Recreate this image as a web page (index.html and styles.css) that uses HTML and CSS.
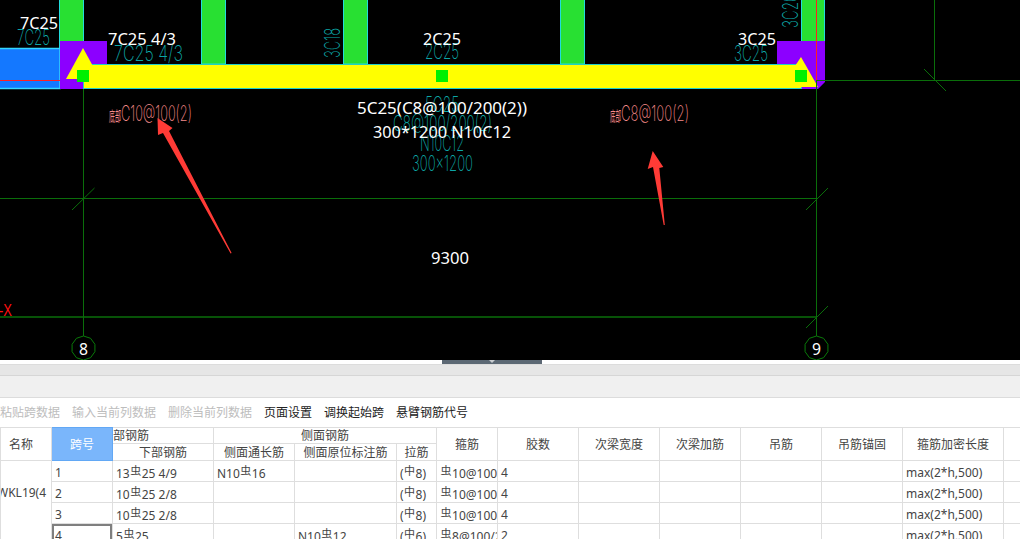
FILE: index.html
```html
<!DOCTYPE html>
<html lang="zh">
<head>
<meta charset="utf-8">
<title>梁平法表格</title>
<link rel="stylesheet" href="styles.css">
</head>
<body>
<svg class="cad" width="1020" height="360" viewBox="0 0 1020 360" xmlns="http://www.w3.org/2000/svg">
  <defs>
    <polygon id="axis" points="0,-12 7.06,-9.71 11.41,-3.71 11.41,3.71 7.06,9.71 0,12 -7.06,9.71 -11.41,3.71 -11.41,-3.71 -7.06,-9.71"/>
  </defs>

  <rect class="col" x="59.5" y="-2" width="24" height="66"/>
  <rect class="col" x="201.5" y="-2" width="24" height="66"/>
  <rect class="col" x="343.5" y="-2" width="24" height="66"/>
  <rect class="col" x="560.5" y="-2" width="24" height="66"/>
  <rect class="col" x="801.5" y="-2" width="23" height="46"/>

  <rect class="side" x="-2" y="48.5" width="62" height="40"/>
  <line class="red" x1="0" y1="80.5" x2="78" y2="80.5"/>

  <path class="purple" d="M60 41H107V64H83V89H60Z"/>
  <path class="purple" d="M777 41H825V82L818 89H801V64H777Z"/>

  <rect class="beam" x="83.5" y="64.5" width="718" height="24"/>
  <polygon class="yellow" points="83,48 66,79 100,79"/>
  <polygon class="yellow" points="801,57 818,87 795,87 795,66"/>

  <rect class="node" x="77" y="70" width="12" height="12"/>
  <rect class="node" x="436" y="70" width="12" height="12"/>
  <rect class="node" x="795" y="70" width="12" height="12"/>

  <line class="red" x1="816.5" y1="0" x2="816.5" y2="80"/>

  <g class="grid">
    <line x1="816.5" y1="80" x2="816.5" y2="336"/>
    <line x1="816" y1="80.5" x2="1020" y2="80.5"/>
    <line x1="934.5" y1="0" x2="934.5" y2="80"/>
    <line x1="924" y1="69" x2="946" y2="91"/>
    <line x1="83.5" y1="89" x2="83.5" y2="336"/>
    <line x1="0" y1="198.5" x2="816" y2="198.5"/>
    <line class="grid-thick" x1="0" y1="317" x2="816" y2="317"/>
    <line x1="72" y1="210" x2="94.5" y2="188"/>
    <line x1="806" y1="210" x2="828" y2="188"/>
    <line x1="806" y1="328" x2="828" y2="306"/>
    <use href="#axis" class="axis" transform="translate(83.5 348)"/>
    <use href="#axis" class="axis" transform="translate(816.5 348)"/>
  </g>

  <g class="teal">
    <text x="17" y="45" textLength="33" lengthAdjust="spacingAndGlyphs">7C25</text>
    <text x="114" y="61" textLength="69" lengthAdjust="spacingAndGlyphs">7C25 4/3</text>
    <text x="340" y="58" textLength="30" lengthAdjust="spacingAndGlyphs" transform="rotate(-90 340 58)">3C18</text>
    <text x="425" y="59" textLength="34" lengthAdjust="spacingAndGlyphs">2C25</text>
    <text x="425" y="112" textLength="34" lengthAdjust="spacingAndGlyphs">5C25</text>
    <text x="393" y="131" textLength="99" lengthAdjust="spacingAndGlyphs">C8@100/200(2)</text>
    <text x="420" y="151" textLength="44" lengthAdjust="spacingAndGlyphs">N10C12</text>
    <text x="412" y="171" textLength="61" lengthAdjust="spacingAndGlyphs">300x1200</text>
    <text x="734" y="61" textLength="34" lengthAdjust="spacingAndGlyphs">3C25</text>
    <text x="798" y="28" textLength="34" lengthAdjust="spacingAndGlyphs" transform="rotate(-90 798 28)">3C20</text>
  </g>

  <g class="pink">
    <text class="pink-cjk" x="109" y="121" textLength="12" lengthAdjust="spacingAndGlyphs">底部</text>
    <text x="121" y="121" textLength="71" lengthAdjust="spacingAndGlyphs">C10@100(2)</text>
    <text class="pink-cjk" x="610" y="121" textLength="11" lengthAdjust="spacingAndGlyphs">底部</text>
    <text x="621" y="121" textLength="68" lengthAdjust="spacingAndGlyphs">C8@100(2)</text>
  </g>

  <g class="label">
    <text x="20" y="29" textLength="38" lengthAdjust="spacingAndGlyphs">7C25</text>
    <text x="108" y="45" textLength="68" lengthAdjust="spacingAndGlyphs">7C25 4/3</text>
    <text x="423" y="45" textLength="38" lengthAdjust="spacingAndGlyphs">2C25</text>
    <text x="738" y="45" textLength="38" lengthAdjust="spacingAndGlyphs">3C25</text>
    <text x="357" y="114" textLength="170" lengthAdjust="spacingAndGlyphs">5C25(C8@100/200(2))</text>
    <text x="373" y="138" textLength="138" lengthAdjust="spacingAndGlyphs">300*1200 N10C12</text>
    <text x="431" y="264" textLength="38" lengthAdjust="spacingAndGlyphs">9300</text>
    <text x="79" y="355" textLength="9" lengthAdjust="spacingAndGlyphs">8</text>
    <text x="812" y="355" textLength="9" lengthAdjust="spacingAndGlyphs">9</text>
  </g>

  <text class="axis-x" x="-1" y="316" textLength="13" lengthAdjust="spacingAndGlyphs">-X</text>

  <polygon class="arrow" points="157.5,118 158,135 163,133 230.6,253.5 231.6,253 169,131 172.5,128"/>
  <polygon class="arrow" points="652.7,151 647.7,169 653,167 663.7,225 664.8,225 659.3,168 663.3,167"/>
</svg>

<div class="strip"><div class="handle"><span class="handle-arrow"></span></div></div>
<div class="bar-gray"></div>
<div class="bar-light"></div>

<div class="toolbar">
  <span class="tool off">粘贴跨数据</span>
  <span class="tool off">输入当前列数据</span>
  <span class="tool off">删除当前列数据</span>
  <span class="tool">页面设置</span>
  <span class="tool">调换起始跨</span>
  <span class="tool">悬臂钢筋代号</span>
</div>

<div class="table-wrap">
<table class="rebar">
  <colgroup>
    <col class="w-name"><col class="w-span"><col class="w-101"><col class="w-81"><col class="w-102"><col class="w-40"><col class="w-61"><col class="w-81"><col class="w-81"><col class="w-81"><col class="w-81"><col class="w-81"><col class="w-101"><col class="w-rest">
  </colgroup>
  <thead>
    <tr class="h1">
      <th rowspan="2" class="name-head">名称</th>
      <th rowspan="2" class="span-head">跨号</th>
      <th class="clip-head">部钢筋</th>
      <th colspan="3">侧面钢筋</th>
      <th rowspan="2">箍筋</th>
      <th rowspan="2">胶数</th>
      <th rowspan="2">次梁宽度</th>
      <th rowspan="2">次梁加筋</th>
      <th rowspan="2">吊筋</th>
      <th rowspan="2">吊筋锚固</th>
      <th rowspan="2">箍筋加密长度</th>
      <th rowspan="2"></th>
    </tr>
    <tr class="h2">
      <th>下部钢筋</th>
      <th>侧面通长筋</th>
      <th>侧面原位标注筋</th>
      <th>拉筋</th>
    </tr>
  </thead>
  <tbody>
    <tr>
      <td rowspan="3" class="name">WKL19(4</td>
      <td>1</td><td>13<span class="bar">虫</span>25 4/9</td><td>N10<span class="bar">虫</span>16</td><td></td><td>(<span class="bar">中</span>8)</td><td><span class="bar">虫</span>10@100/200(4)</td><td>4</td><td></td><td></td><td></td><td></td><td>max(2*h,500)</td><td></td>
    </tr>
    <tr>
      <td>2</td><td>10<span class="bar">虫</span>25 2/8</td><td></td><td></td><td>(<span class="bar">中</span>8)</td><td><span class="bar">虫</span>10@100/200(4)</td><td>4</td><td></td><td></td><td></td><td></td><td>max(2*h,500)</td><td></td>
    </tr>
    <tr>
      <td>3</td><td>10<span class="bar">虫</span>25 2/8</td><td></td><td></td><td>(<span class="bar">中</span>8)</td><td><span class="bar">虫</span>10@100/200(4)</td><td>4</td><td></td><td></td><td></td><td></td><td>max(2*h,500)</td><td></td>
    </tr>
    <tr>
      <td class="name-cont"></td>
      <td class="current">4</td><td>5<span class="bar">虫</span>25</td><td></td><td>N10<span class="bar">虫</span>12</td><td>(<span class="bar">中</span>6)</td><td><span class="bar">虫</span>8@100/200(2)</td><td>2</td><td></td><td></td><td></td><td></td><td>max(2*h,500)</td><td></td>
    </tr>
  </tbody>
</table>
</div>
</body>
</html>
```
FILE: styles.css
```css
html, body {
  margin: 0;
  padding: 0;
}
body {
  width: 1020px;
  height: 539px;
  overflow: hidden;
  background: #fff;
  display: flex;
  flex-direction: column;
  font-family: "Noto Sans", "Noto Sans CJK SC", sans-serif;
  font-size: 12px;
  color: #444;
}

/* CAD drawing */
.cad { display: block; flex: none; background: #000; }
.col { fill: #28e032; stroke: #22dcdc; stroke-width: 1; }
.side { fill: #1478ff; stroke: #33d6ff; stroke-width: 1.5; }
.purple { fill: #8c00ff; }
.beam { fill: #ffff00; stroke: #22cfc8; stroke-width: 1; }
.yellow { fill: #ffff00; }
.node { fill: #00f000; }
.red { stroke: #ff2020; stroke-width: 1; }
.grid line { stroke: #0a6e0a; stroke-width: 1; }
.grid .grid-thick { stroke-width: 1.5; }
.axis { fill: none; stroke: #0a7a0a; stroke-width: 1; }
.teal text {
  fill: #0ca6a6;
  font-family: "Inter", "Liberation Sans", sans-serif;
  font-weight: 200;
  font-size: 22px;
}
.pink text {
  fill: #f58a8a;
  font-family: "Inter", "Liberation Sans", sans-serif;
  font-weight: 200;
  font-size: 21px;
}
.pink .pink-cjk {
  font-family: "Noto Sans CJK SC", sans-serif;
  font-size: 14px;
  font-weight: 400;
}
.label text {
  fill: #fff;
  font-family: "Noto Sans", sans-serif;
  font-size: 16px;
}
.axis-x {
  fill: #ff1010;
  font-family: "Liberation Sans", sans-serif;
  font-size: 16px;
}
.arrow { fill: #ff3b36; }

/* Splitter and empty bars */
.strip {
  flex: none;
  height: 4px;
  background: #fff;
  display: flex;
}
.handle {
  width: 100px;
  height: 4px;
  margin-left: 442px;
  background: #5c6874;
  display: flex;
  justify-content: center;
}
.handle-arrow {
  width: 0;
  height: 0;
  border-left: 3px solid transparent;
  border-right: 3px solid transparent;
  border-top: 3px solid #c8ccd0;
}
.bar-gray {
  flex: none;
  height: 10px;
  background: #e6e6e6;
  border-top: 1px solid #dcdcdc;
  border-bottom: 1px solid #d6d6d6;
}
.bar-light {
  flex: none;
  height: 21px;
  background: #f0f0f0;
  border-bottom: 1px solid #dcdcdc;
}

/* Toolbar */
.toolbar {
  flex: none;
  height: 29px;
  display: flex;
  align-items: center;
  gap: 12px;
  line-height: 16px;
}
.tool { color: #222; }
.tool.off { color: #bdbdbd; }

/* Table */
.table-wrap { flex: 1; min-height: 0; overflow: hidden; }
.rebar {
  table-layout: fixed;
  width: 1020px;
  border-collapse: collapse;
  font-size: 12px;
  line-height: 15px;
}
.w-name { width: 51px; }
.w-span { width: 61px; }
.w-101 { width: 101px; }
.w-102 { width: 102px; }
.w-81 { width: 81px; }
.w-40 { width: 40px; }
.w-61 { width: 61px; }
.w-rest { width: 17px; }
.rebar th, .rebar td {
  border: 1px solid #dedede;
  padding: 0;
  overflow: hidden;
  white-space: nowrap;
}
.rebar th {
  font-weight: 400;
  color: #444;
  text-align: center;
}
.rebar .name-head { padding-right: 10px; }
.h1 { height: 16px; }
.h2 { height: 17px; }
.rebar tbody tr { height: 21px; }
.rebar td {
  padding: 3px 0 0 3px;
  color: #444;
}
.rebar .span-head {
  background: #7ab6fb;
  border: 1px solid #62a8f5;
  color: #fff;
}
.rebar .clip-head { text-align: left; border-bottom: 1px solid #dedede; }
.rebar .name {
  padding: 0;
  text-indent: -4px;
  border-bottom: none;
}
.rebar .name-cont { border-top: none; }
.rebar .current { box-shadow: inset 2px 2px 0 #7f7f7f, inset -2px 0 0 #7f7f7f; }
.bar {
  font-family: "Noto Sans CJK SC", sans-serif;
  font-size: 11px;
  line-height: 10px;
  vertical-align: 3px;
  margin: 0 0.5px;
}
```
